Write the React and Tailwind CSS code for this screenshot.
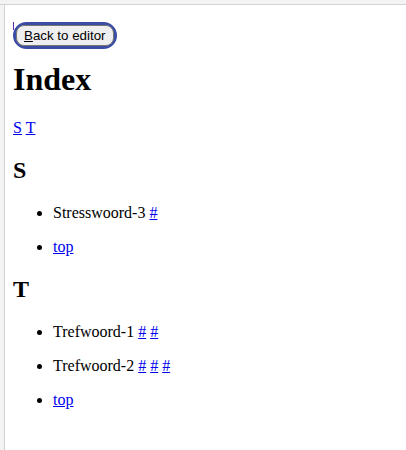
import React from 'react';

const Link = ({ children }) => (
  <a href="#" className="text-[#0000ee] underline">
    {children}
  </a>
);

const Entry = ({ children }) => (
  <li>
    <p className="my-4">{children}</p>
  </li>
);

const App = () => {
  return (
    <div className="flex min-h-[450px] flex-col bg-white font-['Liberation_Serif',serif] text-[16px] leading-[18px] text-black">
      <div className="h-[5px] border-b border-[#d3d3d3] bg-[#f3f3f3]" />
      <div className="flex flex-1">
        <div className="w-[5px] border-r border-[#d3d3d3] bg-[#f3f3f3]" />
        <div className="flex-1 px-2 pb-2 pt-[17px]">
          <div className="relative flex">
            <span className="absolute left-0 top-0 h-[8px] w-px bg-[#6b2bb0]" />
            <span className="inline-flex rounded-full border-[3px] border-[#3a4ca4]">
              <button className="rounded-[8px] border border-[#767676] bg-[#efefef] px-[7px] py-[2px] font-['Liberation_Sans',Arial,sans-serif] text-[13.33px] leading-[15px] text-black">
                <span className="underline">B</span>ack to editor
              </button>
            </span>
          </div>

          <h1 className="mb-[21.44px] mt-[12px] text-[32px] font-bold leading-[37px]">Index</h1>

          <p className="my-4">
            <Link>S</Link> <Link>T</Link>
          </p>

          <h2 className="my-[19.92px] text-[24px] font-bold leading-[27px]">S</h2>
          <ul className="my-4 list-disc pl-10">
            <Entry>
              Stresswoord-3 <Link>#</Link>
            </Entry>
            <Entry>
              <Link>top</Link>
            </Entry>
          </ul>

          <h2 className="my-[19.92px] text-[24px] font-bold leading-[27px]">T</h2>
          <ul className="my-4 list-disc pl-10">
            <Entry>
              Trefwoord-1 <Link>#</Link> <Link>#</Link>
            </Entry>
            <Entry>
              Trefwoord-2 <Link>#</Link> <Link>#</Link> <Link>#</Link>
            </Entry>
            <Entry>
              <Link>top</Link>
            </Entry>
          </ul>
        </div>
      </div>
    </div>
  );
};

export default App;
